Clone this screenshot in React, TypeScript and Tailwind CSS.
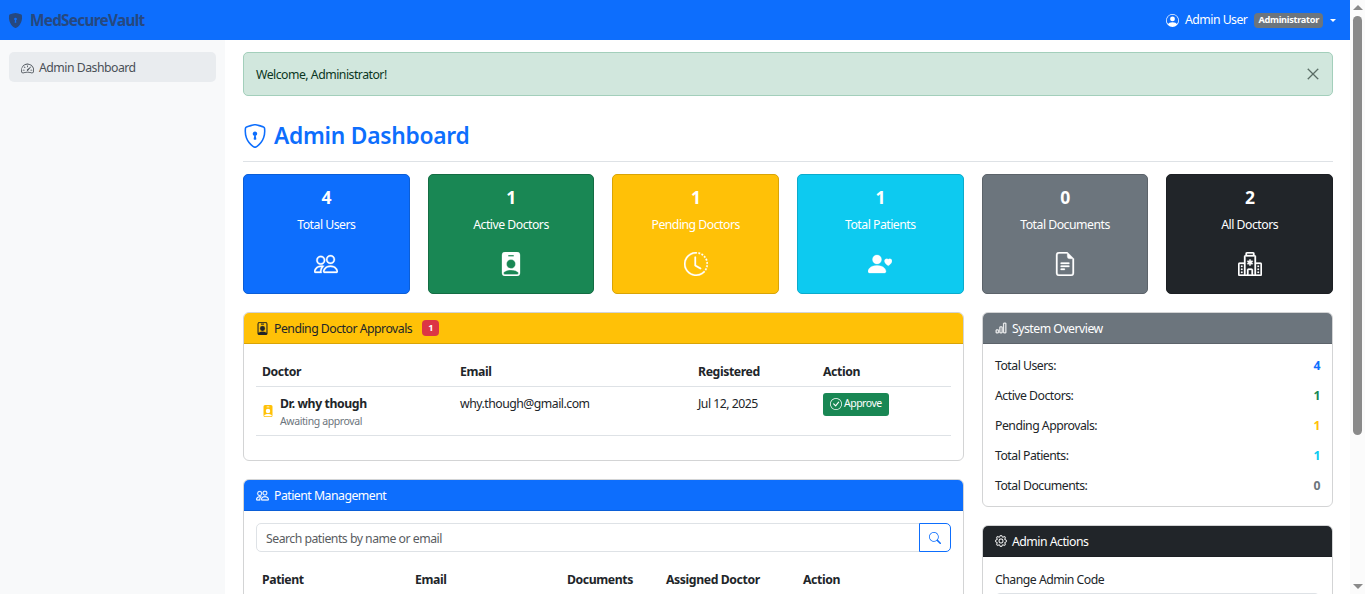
import React from "react";
import {
  BsShieldLockFill, BsShieldLock, BsSpeedometer2, BsPersonCircle, BsPeople, BsPersonBadgeFill, BsPersonBadge,
  BsClockHistory, BsPersonHeart, BsFileEarmarkText, BsHospital, BsBarChart, BsGear, BsCheckCircle, BsSearch, BsXLg,
} from "react-icons/bs";

const stats = [
  { n: "4", l: "Total Users", I: BsPeople, c: "bg-[#0d6efd] border-[#0b5ed7]" },
  { n: "1", l: "Active Doctors", I: BsPersonBadgeFill, c: "bg-[#198754] border-[#146c43]" },
  { n: "1", l: "Pending Doctors", I: BsClockHistory, c: "bg-[#ffc107] border-[#d9a406]" },
  { n: "1", l: "Total Patients", I: BsPersonHeart, c: "bg-[#0dcaf0] border-[#0babcc]" },
  { n: "0", l: "Total Documents", I: BsFileEarmarkText, c: "bg-[#6c757d] border-[#5c636a]" },
  { n: "2", l: "All Doctors", I: BsHospital, c: "bg-[#212529] border-[#1c1f23]" },
];

const overview = [
  ["Total Users:", "4", "text-[#0d6efd]"],
  ["Active Doctors:", "1", "text-[#198754]"],
  ["Pending Approvals:", "1", "text-[#ffc107]"],
  ["Total Patients:", "1", "text-[#0dcaf0]"],
  ["Total Documents:", "0", "text-[#6c757d]"],
];

function Card({ head, headClass, children }: { head: React.ReactNode; headClass: string; children: React.ReactNode }) {
  return (
    <section className="rounded-[6px] border border-[#d3d4d5] bg-white overflow-hidden shrink-0">
      <header className={`h-[31px] flex items-center px-[12px] border-b ${headClass}`}>{head}</header>
      {children}
    </section>
  );
}

export default function App() {
  return (
    <div className="h-[594px] w-[1365px] overflow-hidden flex bg-white text-[#212529] text-[12.25px] tracking-[-0.5px] font-['Noto_Sans',sans-serif]">
      <div className="w-[1350px] flex flex-col min-w-0">
        <nav className="h-[40px] shrink-0 bg-[#0d6efd] flex items-center justify-between pl-[8px] pr-[14px]">
          <div className="flex items-center gap-[7px] text-[#26487f] font-bold text-[15.3px] tracking-[-0.7px]">
            <BsShieldLockFill className="w-[15px] h-[15px]" />
            <span>MedSecureVault</span>
          </div>
          <div className="flex items-center text-white">
            <BsPersonCircle className="w-[13px] h-[13px] mr-[6px]" />
            <span>Admin User</span>
            <span className="ml-[7px] rounded-[4px] bg-[#6c757d] px-[4px] h-[15px] flex items-center text-[9.2px] font-bold tracking-[-0.3px]">Administrator</span>
            <span className="ml-[7px] w-0 h-0 border-x-[3.5px] border-x-transparent border-t-[3.5px] border-t-white" />
          </div>
        </nav>
        <div className="flex flex-1 min-h-0">
          <aside className="w-[225px] shrink-0 bg-[#f8f9fa] pt-[12px] px-[9px]">
            <div className="h-[30px] w-[207px] rounded-[5px] bg-[#e9ecef] flex items-center pl-[12px] pt-[3px] text-[#495057]">
              <BsSpeedometer2 className="w-[13px] h-[13px] mr-[5px]" />
              Admin Dashboard
            </div>
          </aside>
          <main className="flex-1 min-w-0 pl-[18px] pr-[17px] pt-[12px] overflow-hidden">
            <div className="h-[44px] shrink-0 rounded-[5px] border border-[#a3cfbb] bg-[#d1e7dd] text-[#0a3622] flex items-center justify-between pl-[12px] pr-[12px]">
              <span className="pt-[2px]">Welcome, Administrator!</span>
              <BsXLg className="w-[14px] h-[14px] text-[#4a5c54] stroke-[0.5px]" />
            </div>
            <div className="mt-[14px] h-[52px] border-b border-[#dee2e6] flex items-center text-[#0d6efd]">
              <BsShieldLock className="w-[24px] h-[24px] mr-[7px]" />
              <h1 className="text-[22.75px] font-semibold tracking-[-0.25px] pt-[2px]">Admin Dashboard</h1>
            </div>
            <div className="mt-[12px] grid grid-cols-6 gap-[18px]">
              {stats.map((s) => (
                <div key={s.l} className={`h-[120px] rounded-[5px] border text-white flex flex-col items-center pt-[10px] ${s.c}`}>
                  <div className="text-[17.5px] leading-[24px] font-bold">{s.n}</div>
                  <div className="mt-[4px] leading-[24px]">{s.l}</div>
                  <s.I className="mt-[15px] w-[24px] h-[24px] stroke-[0.2px]" />
                </div>
              ))}
            </div>
            <div className="mt-[18px] grid grid-cols-[721px_351px] gap-[18px] items-start">
              <div className="flex flex-col gap-[18px]">
                <Card
                  headClass="bg-[#ffc107] border-[#d9a406]"
                  head={<>
                    <BsPersonBadge className="w-[13px] h-[13px] mr-[5px] stroke-[0.3px]" />
                    <span className="pt-[2px]">Pending Doctor Approvals</span>
                    <span className="ml-[10px] rounded-[4px] bg-[#dc3545] text-white font-bold text-[9.2px] w-[17px] h-[16px] flex items-center justify-center">1</span>
                  </>}
                >
                  <div className="px-[12px] pt-[12px] h-[116px]">
                    <table className="w-full table-fixed border-collapse">
                      <colgroup><col className="w-[198px]" /><col className="w-[238px]" /><col className="w-[125px]" /><col /></colgroup>
                      <thead>
                        <tr className="border-b border-[#dee2e6] h-[30px]">
                          {["Doctor", "Email", "Registered", "Action"].map((h) => <th key={h} className="text-left font-bold px-[6px] pt-[3px] tracking-[-0.4px]">{h}</th>)}
                        </tr>
                      </thead>
                      <tbody>
                        <tr className="border-b border-[#dee2e6] h-[49px] align-top">
                          <td className="px-[6px] pt-[7px]">
                            <div className="flex items-center">
                              <BsPersonBadgeFill className="w-[12px] h-[12px] text-[#ffc107] mr-[6px] shrink-0" />
                              <div>
                                <div className="font-bold leading-[19px] tracking-[-0.4px]">Dr. why though</div>
                                <div className="text-[10.5px] leading-[16px] text-[#6c757d] tracking-[-0.4px]">Awaiting approval</div>
                              </div>
                            </div>
                          </td>
                          <td className="px-[6px] pt-[7px] leading-[20px]">why.though@gmail.com</td>
                          <td className="px-[6px] pt-[7px] leading-[20px]">Jul 12, 2025</td>
                          <td className="px-[6px] pt-[6px]">
                            <button className="h-[23px] rounded-[3px] bg-[#198754] text-white text-[10.5px] flex items-center px-[7px]">
                              <BsCheckCircle className="w-[12px] h-[12px] mr-[2px]" />Approve
                            </button>
                          </td>
                        </tr>
                      </tbody>
                    </table>
                  </div>
                </Card>
                <Card
                  headClass="bg-[#0d6efd] border-[#0b5ed7] text-white"
                  head={<>
                    <BsPeople className="w-[13px] h-[13px] mr-[5px] stroke-[0.3px]" />
                    <span className="pt-[2px]">Patient Management</span>
                  </>}
                >
                  <div className="px-[12px] pt-[12px] h-[140px]">
                    <div className="flex h-[29px]">
                      <div className="flex-1 rounded-l-[5px] border border-[#dee2e6] flex items-center pl-[9px] pt-[4px] text-[#595c5f]">Search patients by name or email</div>
                      <button className="w-[32px] -ml-px rounded-r-[5px] border border-[#0d6efd] text-[#0d6efd] flex items-center justify-center">
                        <BsSearch className="w-[12px] h-[12px]" />
                      </button>
                    </div>
                    <table className="mt-[12px] w-full table-fixed border-collapse">
                      <colgroup><col className="w-[153px]" /><col className="w-[152px]" /><col className="w-[99px]" /><col className="w-[137px]" /><col /></colgroup>
                      <thead>
                        <tr className="h-[31px]">
                          {["Patient", "Email", "Documents", "Assigned Doctor", "Action"].map((h) => <th key={h} className="text-left font-bold px-[6px] pt-[1px] whitespace-nowrap tracking-[-0.4px]">{h}</th>)}
                        </tr>
                      </thead>
                    </table>
                  </div>
                </Card>
              </div>
              <div className="flex flex-col gap-[18px]">
                <Card
                  headClass="bg-[#6c757d] border-[#5c636a] text-white"
                  head={<>
                    <BsBarChart className="w-[12px] h-[12px] mr-[5px] stroke-[0.4px]" />
                    <span className="pt-[2px]">System Overview</span>
                  </>}
                >
                  <div className="px-[12px] pt-[7px] pb-[5px] flex flex-col">
                    {overview.map(([l, v, c]) => (
                      <div key={l} className="h-[30px] flex items-center justify-between">
                        <span>{l}</span>
                        <span className={`font-bold ${c}`}>{v}</span>
                      </div>
                    ))}
                  </div>
                </Card>
                <Card
                  headClass="bg-[#212529] border-[#1c1f23] text-white"
                  head={<>
                    <BsGear className="w-[12px] h-[12px] mr-[5px] stroke-[0.3px]" />
                    <span className="pt-[2px]">Admin Actions</span>
                  </>}
                >
                  <div className="px-[12px] pt-[12px] h-[140px]">
                    <div className="leading-[22px]">Change Admin Code</div>
                    <div className="mt-[2px] h-[29px] rounded-[5px] border border-[#dee2e6]" />
                  </div>
                </Card>
              </div>
            </div>
          </main>
        </div>
      </div>
      <div className="w-[15px] shrink-0 bg-[#fbfbfb] flex flex-col items-center">
        <span className="mt-[5px] w-0 h-0 border-x-[5px] border-x-transparent border-b-[5px] border-b-[#8a8a8a]" />
        <div className="mt-[6px] w-[9px] h-[419px] rounded-[5px] bg-[#8a8a8a]" />
        <span className="mt-auto mb-[5px] w-0 h-0 border-x-[5px] border-x-transparent border-t-[5px] border-t-[#8a8a8a]" />
      </div>
    </div>
  );
}
